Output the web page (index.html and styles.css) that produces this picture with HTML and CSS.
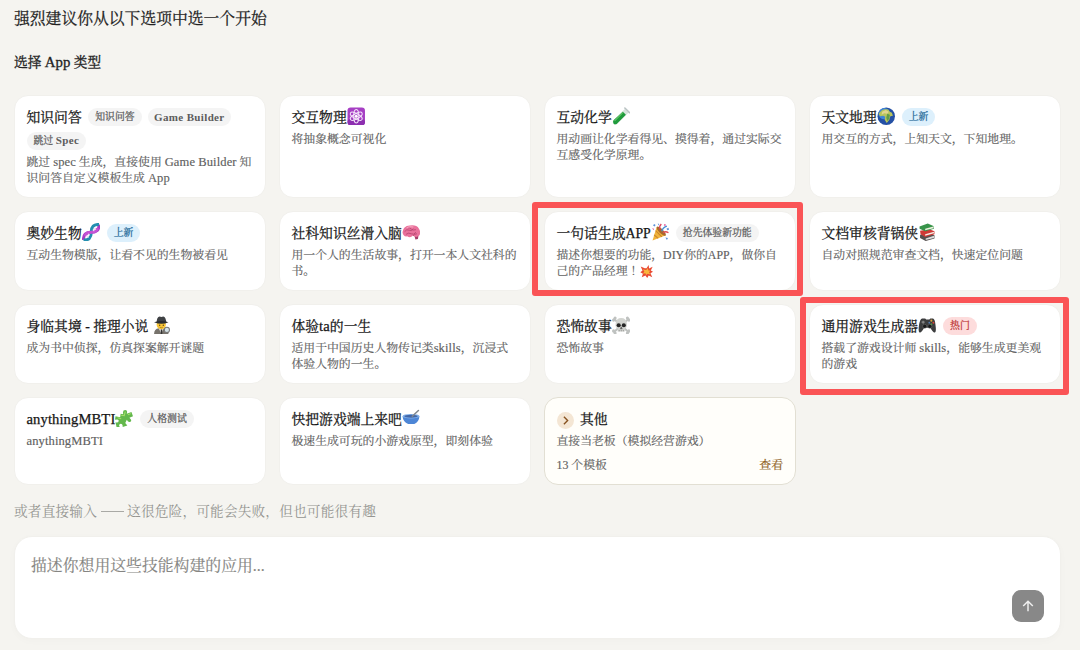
FILE: index.html
```html
<!DOCTYPE html>
<html lang="zh-CN">
<head>
<meta charset="utf-8">
<title>选择 App 类型</title>
<link rel="stylesheet" href="styles.css">
</head>
<body>
<main class="page">
  <h1 class="headline">强烈建议你从以下选项中选一个开始</h1>
  <h2 class="section-title">选择 <b>App</b> 类型</h2>

  <section class="grid">
    <article class="card">
      <div class="head"><h3>知识问答</h3><span class="tag">知识问答</span><span class="tag tag-latin">Game Builder</span><span class="tag">跳过 <b class="tag-word">Spec</b></span></div>
      <p>跳过 <span class="latin">spec</span> 生成，直接使用 <span class="latin">Game Builder</span> 知<br>识问答自定义模板生成 <span class="latin">App</span></p>
    </article>

    <article class="card">
      <div class="head"><h3>交互物理<svg class="emoji" viewBox="0 0 36 36"><rect x="1" y="1" width="34" height="34" rx="6" fill="#a63fc4"/><rect x="1" y="24" width="34" height="11" rx="5" fill="#8d2fb0"/><g fill="none" stroke="#f4e4fa" stroke-width="2"><ellipse cx="18" cy="18" rx="5" ry="13"/><ellipse cx="18" cy="18" rx="5" ry="13" transform="rotate(60 18 18)"/><ellipse cx="18" cy="18" rx="5" ry="13" transform="rotate(120 18 18)"/></g><circle cx="18" cy="18" r="3" fill="#fff"/></svg></h3></div>
      <p>将抽象概念可视化</p>
    </article>

    <article class="card">
      <div class="head"><h3>互动化学<svg class="emoji" viewBox="0 0 36 36"><path d="M25 4l7 7L10 33q-4 3-7 0t0-7z" fill="#d7e3dc"/><path d="M21 9l6 6L9 33q-4 2-6-1t0-6z" fill="#1f9b3c"/><path d="M21 11L5 27" stroke="#63ca68" stroke-width="2"/><path d="M25 2l9 9" stroke="#b9c2c3" stroke-width="3" stroke-linecap="round"/></svg></h3></div>
      <p>用动画让化学看得见、摸得着，通过实际交<br>互感受化学原理。</p>
    </article>

    <article class="card">
      <div class="head"><h3>天文地理<svg class="emoji" viewBox="0 0 36 36"><circle cx="18" cy="18" r="17" fill="#2450a4"/><circle cx="14" cy="13" r="11" fill="#3f86d8"/><path d="M9 7q6-4 13-2l3 4 4 2 2 6-5 1-2 7-5 6-4-6 1-6-4-2-6 1-3-5z" fill="#b7c45c"/><path d="M10 9l7-3 6 3-3 4-6-1-5 3z" fill="#e1d590"/><path d="M20 13l5 2-1 8-4 4-2-6z" fill="#5f9b4a"/></svg></h3><span class="tag tag-new">上新</span></div>
      <p>用交互的方式，上知天文，下知地理。</p>
    </article>

    <article class="card">
      <div class="head"><h3>奥妙生物<svg class="emoji" viewBox="0 0 36 36"><path d="M3 33Q2 18 18 18T33 3" fill="none" stroke="#a83cc4" stroke-width="6"/><path d="M3 33Q18 34 18 18T33 3" fill="none" stroke="#238fb0" stroke-width="6"/><path d="M6 25q2-7 12-7t12-8" fill="none" stroke="#c552d4" stroke-width="6"/><g stroke="#f3dff6" stroke-width="2"><path d="M9 24l4 4M12 21l3 3M23 9l4 4M21 13l3 3"/></g></svg></h3><span class="tag tag-new">上新</span></div>
      <p>互动生物模版，让看不见的生物被看见</p>
    </article>

    <article class="card">
      <div class="head"><h3>社科知识丝滑入脑<svg class="emoji" viewBox="0 0 36 36"><path d="M24 24l8 1-1 6-5 1z" fill="#a63e6a"/><path d="M1 18Q2 6 15 5q13-2 18 6 5 8 0 14-5 4-12 0-5 5-11 1Q2 27 1 18z" fill="#e9719b"/><path d="M5 17q4-6 9-3t8-3M10 9q6 0 8 3t9 1M8 22q5-4 10-1t9-3M22 25q1-4 7-4" fill="none" stroke="#b94873" stroke-width="1.8"/><path d="M9 10q5-4 13-2" fill="none" stroke="#f8a8c0" stroke-width="2"/></svg></h3></div>
      <p>用一个人的生活故事，打开一本人文社科的<br>书。</p>
    </article>

    <article class="card featured">
      <div class="head"><h3>一句话生成APP<svg class="emoji" viewBox="0 0 36 36"><path d="M11 8l18 16L3 34z" fill="#f0b53b"/><path d="M9 15l12 12M6 23l8 7" stroke="#c9832b" stroke-width="2"/><ellipse cx="20" cy="16" rx="4" ry="12" transform="rotate(-45 20 16)" fill="#a9692e"/><g fill="none" stroke-width="2.6"><path d="M18 12q-3-5 2-10" stroke="#df4661"/><path d="M21 16q2-8 10-10" stroke="#4d8ed4"/><path d="M24 19q4-4 10 0" stroke="#e34e55"/></g><path d="M6 2l3 2-2 3-3-2zM30 11l4-2 1 4-3 1zM28 28l5 1-2 4zM13 1l3 1-1 3z" fill="#5b91d8"/><path d="M26 2l3 1-1 3-3-1zM2 10l4 1-1 3z" fill="#e45a9b"/></svg></h3><span class="tag">抢先体验新功能</span></div>
      <p>描述你想要的功能，DIY你的APP，做你自<br>己的产品经理<span class="bang">！</span><svg class="emoji" viewBox="0 0 36 36"><path d="M18 9l6-9 1 10 10-5-5 10 6 4-7 4 5 11-10-5-4 7-5-7-10 5 3-10-7-4 6-5L2 4l11 5z" fill="#e94b34"/><path d="M18 13l4-5 1 7 6 0-4 5 4 6-8-2-4 4-2-5-7 1 4-6-4-6 7 2z" fill="#f9b63d"/></svg></p>
    </article>

    <article class="card">
      <div class="head"><h3>文档审核背锅侠<svg class="emoji" viewBox="0 0 36 36"><path d="M4 23l18-4 10 5v6l-17 5-11-6z" fill="#55504f"/><path d="M15 30l16-5v4l-16 4z" fill="#ddd"/><path d="M4 15l18-3 10 4v6l-18 5-9-5z" fill="#cf3936"/><path d="M14 22l17-5v3l-17 5z" fill="#f4eee5"/><path d="M3 7l16-6 11 5 1 5-17 5L3 11z" fill="#38944a"/><path d="M14 11l16-4v3l-16 4z" fill="#eef2df"/></svg></h3></div>
      <p>自动对照规范审查文档，快速定位问题</p>
    </article>

    <article class="card">
      <div class="head"><h3>身临其境 - 推理小说 <svg class="emoji" viewBox="0 0 36 36"><path d="M4 36q0-11 9-12h10q9 1 9 12z" fill="#77736c"/><path d="M13 24h10l-5 10z" fill="#eee"/><path d="M17 26h3v10h-3z" fill="#343434"/><circle cx="18" cy="17" r="9" fill="#f8c636"/><path d="M9 13q0-11 6-12l3 1 4-1q5 1 6 12z" fill="#3f4144"/><path d="M4 12q14-5 28 0-13 6-28 0z" fill="#292c30"/><circle cx="15" cy="18" r="1.3" fill="#563a20"/><circle cx="22" cy="18" r="1.3" fill="#563a20"/><path d="M15 22q3 2 6 0" stroke="#76501a" fill="none"/><circle cx="29" cy="27" r="5" fill="#d5e4e8" stroke="#777" stroke-width="2"/></svg></h3></div>
      <p>成为书中侦探，仿真探案解开谜题</p>
    </article>

    <article class="card">
      <div class="head"><h3>体验<span class="latin">ta</span>的一生</h3></div>
      <p>适用于中国历史人物传记类<span class="latin">skills</span>，沉浸式<br>体验人物的一生。</p>
    </article>

    <article class="card">
      <div class="head"><h3>恐怖故事<svg class="emoji" viewBox="0 0 36 36"><g stroke="#bfc2c0" stroke-width="4" stroke-linecap="round"><path d="M4 6l28 25M32 6L4 31"/></g><g fill="#bfc2c0"><circle cx="3" cy="8" r="3"/><circle cx="6" cy="4" r="3"/><circle cx="30" cy="4" r="3"/><circle cx="33" cy="8" r="3"/><circle cx="3" cy="29" r="3"/><circle cx="6" cy="33" r="3"/><circle cx="30" cy="33" r="3"/><circle cx="33" cy="29" r="3"/></g><path d="M7 15Q8 4 18 4t11 11q1 7-4 9v6H11v-6q-5-2-4-9z" fill="#d2d4d0"/><circle cx="13" cy="18" r="4" fill="#252525"/><circle cx="23" cy="18" r="4" fill="#252525"/><path d="M18 21l-2 4h4zM14 27v3M18 27v3M22 27v3" fill="#333" stroke="#666"/></svg></h3></div>
      <p>恐怖故事</p>
    </article>

    <article class="card featured featured-low">
      <div class="head"><h3>通用游戏生成器<svg class="emoji" viewBox="0 0 36 36"><path d="M8 5h6l2 2h6l2-2h5q4 1 5 12 2 14-1 15-3 2-9-9H12Q6 34 3 32q-3-1-1-15Q4 6 8 5z" fill="#3c3d3e"/><path d="M7 12h6M10 9v6" stroke="#8a8b8b" stroke-width="2.3"/><circle cx="13" cy="20" r="4" fill="#171819" stroke="#737373"/><circle cx="23" cy="20" r="4" fill="#171819" stroke="#737373"/><circle cx="26" cy="9" r="2" fill="#d9a23a"/><circle cx="30" cy="13" r="2" fill="#d74435"/><circle cx="22" cy="13" r="1.8" fill="#547fb5"/><circle cx="26" cy="16" r="1.8" fill="#55934b"/></svg></h3><span class="tag tag-hot">热门</span></div>
      <p>搭载了游戏设计师 <span class="latin">skills</span>，能够生成更美观<br>的游戏</p>
    </article>

    <article class="card">
      <div class="head"><h3><span class="latin">anythingMBTI</span><svg class="emoji" viewBox="0 0 36 36"><path d="M11 9l5 1q-2-8 4-8 5 0 3 7l9-3 3 8-7 3q6 5 2 8-4 2-7-4l-3 6 4 5-9 3q0-7-5-6-4 2 0 7l-7-1-2-9q7 1 6-4-1-3-7-1l1-7 9 2z" fill="#63b84c"/><path d="M12 12l6 1 2-8M25 11l6-2M5 17l7 2" fill="none" stroke="#a4df69" stroke-width="2"/></svg></h3><span class="tag">人格测试</span></div>
      <p><span class="latin">anythingMBTI</span></p>
    </article>

    <article class="card">
      <div class="head"><h3>快把游戏端上来吧<svg class="emoji" viewBox="0 0 36 36"><path d="M1 14h33q-1 11-10 15H12Q2 25 1 14z" fill="#4d86d6"/><ellipse cx="17.500" cy="14" rx="16.500" ry="4.500" fill="#80afe9"/><ellipse cx="17.500" cy="14" rx="13" ry="2.800" fill="#4267a8"/><path d="M20 14L32 3" stroke="#81878d" stroke-width="3" stroke-linecap="round"/></svg></h3></div>
      <p>极速生成可玩的小游戏原型，即刻体验</p>
    </article>

    <article class="card other">
      <div class="head"><span class="round"><svg viewBox="0 0 16 16"><path d="M6.500 4.500L10 8l-3.500 3.500"/></svg></span><h3>其他</h3></div>
      <p>直接当老板（模拟经营游戏）</p>
      <footer><span>13 个模板</span><a class="view">查看</a></footer>
    </article>
  </section>

  <p class="hint">或者直接输入 <span class="dash"></span> 这很危险，可能会失败，但也可能很有趣</p>

  <div class="composer">
    <span class="placeholder">描述你想用这些技能构建的应用...</span>
    <button class="send" aria-label="发送"><svg viewBox="0 0 16 16"><path d="M8 14V2.500M2.500 8L8 2.500 13.500 8"/></svg></button>
  </div>
</main>
</body>
</html>
```
FILE: styles.css
```css
* { box-sizing: border-box; }
body {
  margin: 0;
  background: #f5f4f0;
  color: #222;
  font-family: "Liberation Serif", "Noto Serif CJK SC", "Noto Sans CJK SC", serif;
}
h1, h2, h3, p { margin: 0; }
.page {
  width: 1080px;
  height: 650px;
  padding: 7px 19.500px 0 14px;
  overflow: hidden;
}
.headline { font-size: 15.800px; line-height: 24px; font-weight: 400; -webkit-text-stroke: .25px; }
.section-title { margin-top: 22px; font-size: 13.700px; line-height: 20px; font-weight: 400; -webkit-text-stroke: .3px; }
.section-title b { font-weight: 400; font-size: 14.800px; line-height: 1; }
.latin { font-size: 1.060em; letter-spacing: .1px; line-height: 1; }
.grid {
  display: grid;
  grid-template-columns: repeat(4, 252px);
  grid-template-rows: 103px 80px 80px 88px;
  gap: 13px;
  margin-top: 22px;
}
.card {
  position: relative;
  padding: 12px 12px 0 11.500px;
  border: 1px solid #f1f0ec;
  border-radius: 14px;
  background: #fff;
  white-space: nowrap;
}
.head { display: flex; flex-wrap: wrap; align-items: center; column-gap: 6.500px; row-gap: 5px; min-height: 20px; }
.head h3 { height: 20px; font-size: 13.800px; line-height: 20px; font-weight: 400; color: #161616; -webkit-text-stroke: .25px; }
.emoji { width: 18.500px; height: 18.500px; margin: -4px 0; vertical-align: 1px; }
.card p { margin-top: 3px; font-size: 11.850px; line-height: 16px; color: #606060; -webkit-text-stroke: .15px; }
.card p .emoji { width: 13px; height: 13px; margin: -1px 0; vertical-align: -1.500px; }
.bang { display: inline-block; text-indent: 3px; width: 12.500px; }
.tag {
  padding: 0 7px;
  margin-top: -1px;
  margin-bottom: 1px;
  border-radius: 9px;
  background: #f4f4f4;
  color: #5c5c5c;
  font-size: 9.850px;
  line-height: 18px;
  -webkit-text-stroke: .25px;
}
.tag-latin { padding: 0 6px; font-weight: 700; font-size: 11px; letter-spacing: .35px; -webkit-text-stroke: 0; }
.tag-word { font-size: 11px; letter-spacing: .4px; line-height: 1; -webkit-text-stroke: 0; }
.tag-new { background: #ddf0fc; color: #2a6e9c; }
.tag-hot { background: #fddcdc; color: #c03c3c; }
.featured::after {
  content: "";
  position: absolute;
  inset: -10px -8px -6px -13px;
  border: 6px solid #fa5456;
  border-radius: 3px;
}
.featured-low::after { inset: -8px -9px -12px -10px; }
.other { border-color: #e2dfd3; background: #fffefa; }
.round {
  width: 17px;
  height: 17px;
  border-radius: 50%;
  background: #f4e6d4;
}
.round svg { display: block; width: 17px; height: 17px; fill: none; stroke: #87521f; stroke-width: 1.300; }
footer { display: flex; justify-content: space-between; margin-top: 8px; color: #606060; font-size: 11.850px; line-height: 16px; -webkit-text-stroke: .15px; }
.view { color: #8e5d21; -webkit-text-stroke: .2px; }
.hint { margin-top: 17px; font-size: 13.700px; line-height: 20px; letter-spacing: .14px; color: #949490; }
.dash { display: inline-block; width: 23px; height: 1px; background: #a9a9a5; vertical-align: 4px; }
.composer {
  display: flex;
  justify-content: space-between;
  height: 103px;
  margin-top: 14px;
  padding: 16.500px 16px 16px;
  border: 1px solid #f1f0ec;
  border-radius: 18px;
  background: #fff;
  box-shadow: 0 2px 8px rgba(0, 0, 0, .02);
}
.placeholder { font-size: 15.850px; line-height: 24px; color: #858582; -webkit-text-stroke: .15px; }
.send {
  align-self: flex-end;
  display: grid;
  place-items: center;
  width: 32px;
  height: 32px;
  padding: 0;
  border: 0;
  border-radius: 9px;
  background: #888;
}
.send svg { width: 14px; height: 14px; fill: none; stroke: #eee; stroke-width: 1.700; }
```
